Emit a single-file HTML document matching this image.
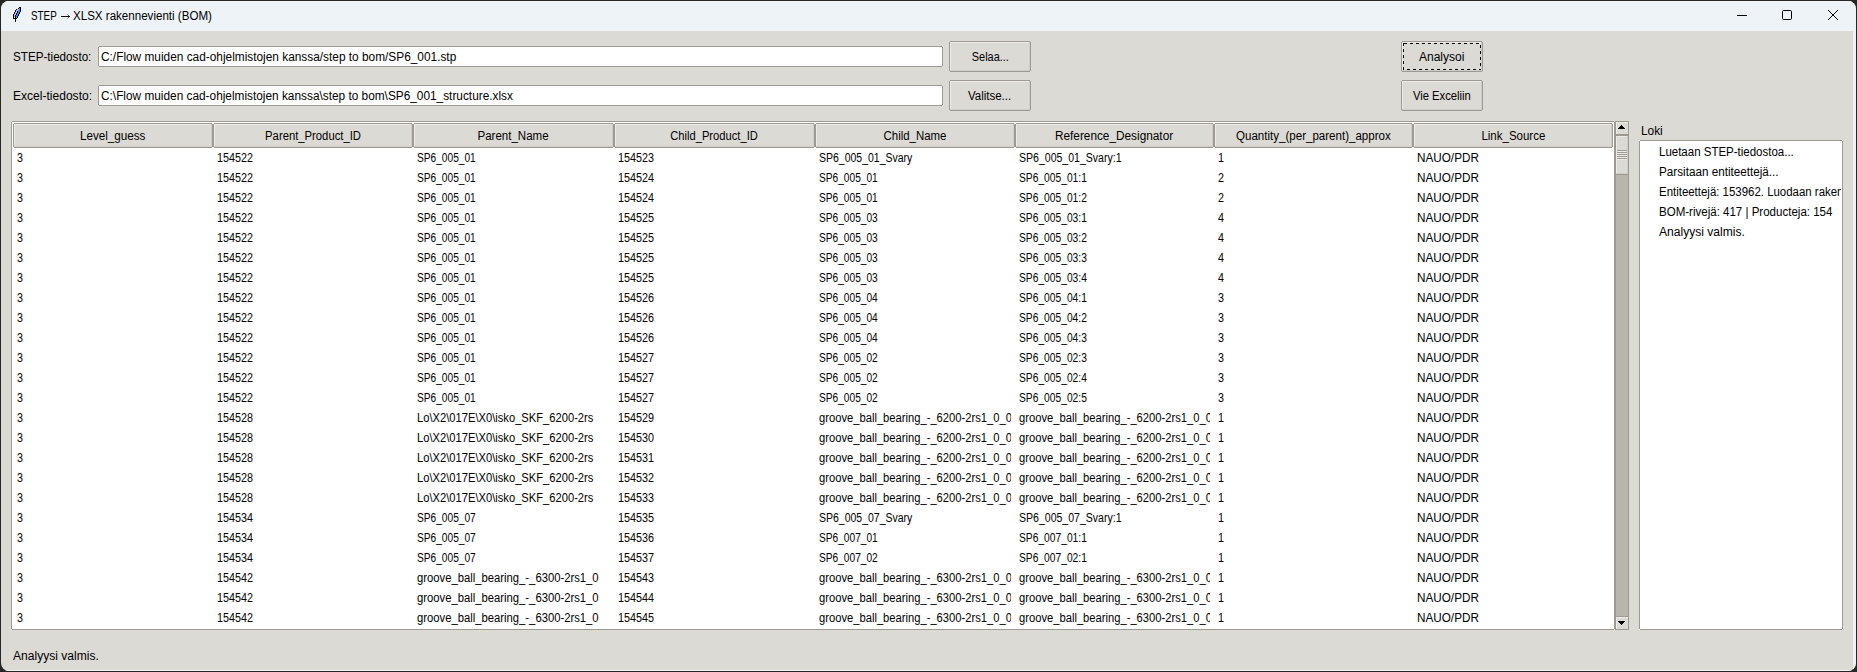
<!DOCTYPE html>
<html><head><meta charset="utf-8"><style>
html,body{margin:0;padding:0}
body{width:1857px;height:672px;background:#262626;overflow:hidden;position:relative;font-family:"Liberation Sans",sans-serif;font-size:12px;color:#000}
#win{position:absolute;left:0;top:0;width:1857px;height:672px;background:#dcdad5;clip-path:inset(1px 1px 1px 1px round 8px)}
.r{position:absolute}
.s{display:inline-block;white-space:pre}
.t{position:absolute;white-space:pre;line-height:14px}
.td{position:absolute;height:14px;line-height:14px;white-space:pre;overflow:hidden}
</style></head><body><div id="win">
<div class="r" style="left:0px;top:0px;width:1857px;height:31px;background:#edf3f7"></div>
<div class="r" style="left:0px;top:0px;width:1857px;height:2px;background:#f7fafc"></div>
<svg class="r" style="left:0;top:0" width="30" height="30" shape-rendering="crispEdges"><rect x="19" y="7" width="1" height="1" fill="#000"/><rect x="20" y="7" width="1" height="1" fill="#000"/><rect x="18" y="8" width="1" height="1" fill="#000"/><rect x="19" y="8" width="1" height="1" fill="#3d8ae6"/><rect x="20" y="8" width="1" height="1" fill="#000"/><rect x="16" y="9" width="1" height="1" fill="#000"/><rect x="17" y="9" width="1" height="1" fill="#9cc4f4"/><rect x="18" y="9" width="1" height="1" fill="#9cc4f4"/><rect x="19" y="9" width="1" height="1" fill="#3d8ae6"/><rect x="20" y="9" width="1" height="1" fill="#000"/><rect x="15" y="10" width="1" height="1" fill="#000"/><rect x="16" y="10" width="1" height="1" fill="#9cc4f4"/><rect x="17" y="10" width="1" height="1" fill="#9cc4f4"/><rect x="18" y="10" width="1" height="1" fill="#3d8ae6"/><rect x="19" y="10" width="1" height="1" fill="#3d8ae6"/><rect x="20" y="10" width="1" height="1" fill="#000"/><rect x="15" y="11" width="1" height="1" fill="#000"/><rect x="16" y="11" width="1" height="1" fill="#9cc4f4"/><rect x="17" y="11" width="1" height="1" fill="#000"/><rect x="18" y="11" width="1" height="1" fill="#3d8ae6"/><rect x="19" y="11" width="1" height="1" fill="#3d8ae6"/><rect x="20" y="11" width="1" height="1" fill="#000"/><rect x="14" y="12" width="1" height="1" fill="#000"/><rect x="15" y="12" width="1" height="1" fill="#9cc4f4"/><rect x="16" y="12" width="1" height="1" fill="#9cc4f4"/><rect x="17" y="12" width="1" height="1" fill="#000"/><rect x="18" y="12" width="1" height="1" fill="#3d8ae6"/><rect x="19" y="12" width="1" height="1" fill="#000"/><rect x="14" y="13" width="1" height="1" fill="#000"/><rect x="15" y="13" width="1" height="1" fill="#9cc4f4"/><rect x="16" y="13" width="1" height="1" fill="#000"/><rect x="17" y="13" width="1" height="1" fill="#3d8ae6"/><rect x="18" y="13" width="1" height="1" fill="#3d8ae6"/><rect x="19" y="13" width="1" height="1" fill="#000"/><rect x="13" y="14" width="1" height="1" fill="#000"/><rect x="14" y="14" width="1" height="1" fill="#9cc4f4"/><rect x="15" y="14" width="1" height="1" fill="#9cc4f4"/><rect x="16" y="14" width="1" height="1" fill="#000"/><rect x="17" y="14" width="1" height="1" fill="#3d8ae6"/><rect x="18" y="14" width="1" height="1" fill="#000"/><rect x="13" y="15" width="1" height="1" fill="#000"/><rect x="14" y="15" width="1" height="1" fill="#9cc4f4"/><rect x="15" y="15" width="1" height="1" fill="#000"/><rect x="16" y="15" width="1" height="1" fill="#3d8ae6"/><rect x="17" y="15" width="1" height="1" fill="#3d8ae6"/><rect x="18" y="15" width="1" height="1" fill="#000"/><rect x="13" y="16" width="1" height="1" fill="#000"/><rect x="14" y="16" width="1" height="1" fill="#9cc4f4"/><rect x="15" y="16" width="1" height="1" fill="#000"/><rect x="16" y="16" width="1" height="1" fill="#3d8ae6"/><rect x="17" y="16" width="1" height="1" fill="#000"/><rect x="13" y="17" width="1" height="1" fill="#000"/><rect x="14" y="17" width="1" height="1" fill="#fff"/><rect x="15" y="17" width="1" height="1" fill="#000"/><rect x="16" y="17" width="1" height="1" fill="#3d8ae6"/><rect x="17" y="17" width="1" height="1" fill="#000"/><rect x="13" y="18" width="1" height="1" fill="#000"/><rect x="14" y="18" width="1" height="1" fill="#000"/><rect x="15" y="18" width="1" height="1" fill="#000"/><rect x="16" y="18" width="1" height="1" fill="#000"/><rect x="15" y="19" width="1" height="1" fill="#000"/><rect x="15" y="20" width="1" height="1" fill="#000"/><rect x="15" y="21" width="1" height="1" fill="#000"/></svg>
<div class="t" style="left:31px;top:9px;"><span class="s" style="transform:scaleX(0.8200);transform-origin:left">STEP</span></div>
<div class="r" style="left:61px;top:16px;width:9px;height:1px;background:#000"></div>
<div class="r" style="left:67px;top:14px;width:1px;height:1px;background:#b0b0b0"></div>
<div class="r" style="left:68px;top:15px;width:1px;height:1px;background:#606060"></div>
<div class="r" style="left:68px;top:17px;width:1px;height:1px;background:#606060"></div>
<div class="r" style="left:67px;top:18px;width:1px;height:1px;background:#b0b0b0"></div>
<div class="t" style="left:73px;top:9px;"><span class="s" style="transform:scaleX(0.9640);transform-origin:left">XLSX rakennevienti (BOM)</span></div>
<svg class="r" style="left:1730px;top:5px" width="120" height="22">
<line x1="7" y1="10.5" x2="17" y2="10.5" stroke="#000" stroke-width="1"/>
<rect x="52.5" y="5.5" width="9" height="9" rx="1.2" fill="none" stroke="#000" stroke-width="1"/>
<line x1="98" y1="5" x2="108" y2="15" stroke="#000" stroke-width="1"/>
<line x1="108" y1="5" x2="98" y2="15" stroke="#000" stroke-width="1"/>
</svg>
<div class="r" style="left:1853px;top:31px;width:4px;height:641px;background:#f1f1f1"></div>
<div class="r" style="left:0px;top:670px;width:1857px;height:2px;background:#f1f1f1"></div>
<div class="t" style="left:13px;top:50px;"><span class="s" style="transform:scaleX(0.9710);transform-origin:left">STEP-tiedosto:</span></div>
<div class="r" style="left:99px;top:47px;width:843px;height:19px;background:#ffffff"></div>
<div class="r" style="left:99px;top:46px;width:843px;height:1px;background:#9e9a91"></div>
<div class="r" style="left:99px;top:66px;width:843px;height:1px;background:#9e9a91"></div>
<div class="r" style="left:98px;top:47px;width:1px;height:19px;background:#9e9a91"></div>
<div class="r" style="left:942px;top:47px;width:1px;height:19px;background:#9e9a91"></div>
<div class="t" style="left:101px;top:50px;"><span class="s" style="transform:scaleX(0.9881);transform-origin:left">C:/Flow muiden cad-ohjelmistojen kanssa/step to bom/SP6_001.stp</span></div>
<div class="r" style="left:950px;top:42px;width:80px;height:29px;background:#dcdad5"></div>
<div class="r" style="left:950px;top:41px;width:80px;height:1px;background:#9e9a91"></div>
<div class="r" style="left:950px;top:71px;width:80px;height:1px;background:#9e9a91"></div>
<div class="r" style="left:949px;top:42px;width:1px;height:29px;background:#9e9a91"></div>
<div class="r" style="left:1030px;top:42px;width:1px;height:29px;background:#9e9a91"></div>
<div class="r" style="left:950px;top:42px;width:80px;height:1px;background:#eeebe7"></div>
<div class="r" style="left:950px;top:42px;width:1px;height:29px;background:#eeebe7"></div>
<div class="r" style="left:950px;top:70px;width:80px;height:1px;background:#cfcdc8"></div>
<div class="r" style="left:1029px;top:42px;width:1px;height:29px;background:#cfcdc8"></div>
<div class="t" style="left:949px;top:50px;width:82px;text-align:center;"><span class="s" style="transform:scaleX(0.9110);transform-origin:center">Selaa...</span></div>
<div class="r" style="left:1402px;top:42px;width:80px;height:29px;background:#dcdad5"></div>
<div class="r" style="left:1402px;top:41px;width:80px;height:1px;background:#9e9a91"></div>
<div class="r" style="left:1402px;top:71px;width:80px;height:1px;background:#9e9a91"></div>
<div class="r" style="left:1401px;top:42px;width:1px;height:29px;background:#9e9a91"></div>
<div class="r" style="left:1482px;top:42px;width:1px;height:29px;background:#9e9a91"></div>
<div class="r" style="left:1402px;top:42px;width:80px;height:1px;background:#eeebe7"></div>
<div class="r" style="left:1402px;top:42px;width:1px;height:29px;background:#eeebe7"></div>
<div class="r" style="left:1402px;top:70px;width:80px;height:1px;background:#cfcdc8"></div>
<div class="r" style="left:1481px;top:42px;width:1px;height:29px;background:#cfcdc8"></div>
<svg class="r" style="left:1403px;top:43px" width="78" height="27" shape-rendering="crispEdges"><rect x="0.5" y="0.5" width="77" height="26" fill="none" stroke="#000" stroke-width="1" stroke-dasharray="3,3"/></svg>
<div class="t" style="left:1401px;top:50px;width:82px;text-align:center;"><span class="s" style="transform:scaleX(1.0033);transform-origin:center">Analysoi</span></div>
<div class="t" style="left:13px;top:89px;"><span class="s" style="transform:scaleX(1.0043);transform-origin:left">Excel-tiedosto:</span></div>
<div class="r" style="left:99px;top:86px;width:843px;height:19px;background:#ffffff"></div>
<div class="r" style="left:99px;top:85px;width:843px;height:1px;background:#9e9a91"></div>
<div class="r" style="left:99px;top:105px;width:843px;height:1px;background:#9e9a91"></div>
<div class="r" style="left:98px;top:86px;width:1px;height:19px;background:#9e9a91"></div>
<div class="r" style="left:942px;top:86px;width:1px;height:19px;background:#9e9a91"></div>
<div class="t" style="left:101px;top:89px;"><span class="s" style="transform:scaleX(0.9866);transform-origin:left">C:\Flow muiden cad-ohjelmistojen kanssa\step to bom\SP6_001_structure.xlsx</span></div>
<div class="r" style="left:950px;top:81px;width:80px;height:29px;background:#dcdad5"></div>
<div class="r" style="left:950px;top:80px;width:80px;height:1px;background:#9e9a91"></div>
<div class="r" style="left:950px;top:110px;width:80px;height:1px;background:#9e9a91"></div>
<div class="r" style="left:949px;top:81px;width:1px;height:29px;background:#9e9a91"></div>
<div class="r" style="left:1030px;top:81px;width:1px;height:29px;background:#9e9a91"></div>
<div class="r" style="left:950px;top:81px;width:80px;height:1px;background:#eeebe7"></div>
<div class="r" style="left:950px;top:81px;width:1px;height:29px;background:#eeebe7"></div>
<div class="r" style="left:950px;top:109px;width:80px;height:1px;background:#cfcdc8"></div>
<div class="r" style="left:1029px;top:81px;width:1px;height:29px;background:#cfcdc8"></div>
<div class="t" style="left:949px;top:89px;width:82px;text-align:center;"><span class="s" style="transform:scaleX(0.9594);transform-origin:center">Valitse...</span></div>
<div class="r" style="left:1402px;top:81px;width:80px;height:29px;background:#dcdad5"></div>
<div class="r" style="left:1402px;top:80px;width:80px;height:1px;background:#9e9a91"></div>
<div class="r" style="left:1402px;top:110px;width:80px;height:1px;background:#9e9a91"></div>
<div class="r" style="left:1401px;top:81px;width:1px;height:29px;background:#9e9a91"></div>
<div class="r" style="left:1482px;top:81px;width:1px;height:29px;background:#9e9a91"></div>
<div class="r" style="left:1402px;top:81px;width:80px;height:1px;background:#eeebe7"></div>
<div class="r" style="left:1402px;top:81px;width:1px;height:29px;background:#eeebe7"></div>
<div class="r" style="left:1402px;top:109px;width:80px;height:1px;background:#cfcdc8"></div>
<div class="r" style="left:1481px;top:81px;width:1px;height:29px;background:#cfcdc8"></div>
<div class="t" style="left:1401px;top:89px;width:82px;text-align:center;"><span class="s" style="transform:scaleX(0.9374);transform-origin:center">Vie Exceliin</span></div>
<div class="r" style="left:12px;top:122px;width:1602px;height:507px;background:#ffffff"></div>
<div class="r" style="left:12px;top:121px;width:1602px;height:1px;background:#9e9a91"></div>
<div class="r" style="left:12px;top:629px;width:1602px;height:1px;background:#9e9a91"></div>
<div class="r" style="left:11px;top:122px;width:1px;height:507px;background:#9e9a91"></div>
<div class="r" style="left:1614px;top:122px;width:1px;height:507px;background:#9e9a91"></div>
<div class="r" style="left:14px;top:124px;width:198px;height:23px;background:#dcdad5"></div>
<div class="r" style="left:14px;top:123px;width:198px;height:1px;background:#9e9a91"></div>
<div class="r" style="left:14px;top:147px;width:198px;height:1px;background:#9e9a91"></div>
<div class="r" style="left:13px;top:124px;width:1px;height:23px;background:#9e9a91"></div>
<div class="r" style="left:212px;top:124px;width:1px;height:23px;background:#9e9a91"></div>
<div class="r" style="left:14px;top:124px;width:198px;height:1px;background:#eeebe7"></div>
<div class="r" style="left:14px;top:124px;width:1px;height:23px;background:#eeebe7"></div>
<div class="r" style="left:14px;top:146px;width:198px;height:1px;background:#cfcdc8"></div>
<div class="r" style="left:211px;top:124px;width:1px;height:23px;background:#cfcdc8"></div>
<div class="t" style="left:13px;top:129px;width:200px;text-align:center;"><span class="s" style="transform:scaleX(0.9724);transform-origin:center">Level_guess</span></div>
<div class="r" style="left:214px;top:124px;width:198px;height:23px;background:#dcdad5"></div>
<div class="r" style="left:214px;top:123px;width:198px;height:1px;background:#9e9a91"></div>
<div class="r" style="left:214px;top:147px;width:198px;height:1px;background:#9e9a91"></div>
<div class="r" style="left:213px;top:124px;width:1px;height:23px;background:#9e9a91"></div>
<div class="r" style="left:412px;top:124px;width:1px;height:23px;background:#9e9a91"></div>
<div class="r" style="left:214px;top:124px;width:198px;height:1px;background:#eeebe7"></div>
<div class="r" style="left:214px;top:124px;width:1px;height:23px;background:#eeebe7"></div>
<div class="r" style="left:214px;top:146px;width:198px;height:1px;background:#cfcdc8"></div>
<div class="r" style="left:411px;top:124px;width:1px;height:23px;background:#cfcdc8"></div>
<div class="t" style="left:213px;top:129px;width:200px;text-align:center;"><span class="s" style="transform:scaleX(0.9391);transform-origin:center">Parent_Product_ID</span></div>
<div class="r" style="left:414px;top:124px;width:199px;height:23px;background:#dcdad5"></div>
<div class="r" style="left:414px;top:123px;width:199px;height:1px;background:#9e9a91"></div>
<div class="r" style="left:414px;top:147px;width:199px;height:1px;background:#9e9a91"></div>
<div class="r" style="left:413px;top:124px;width:1px;height:23px;background:#9e9a91"></div>
<div class="r" style="left:613px;top:124px;width:1px;height:23px;background:#9e9a91"></div>
<div class="r" style="left:414px;top:124px;width:199px;height:1px;background:#eeebe7"></div>
<div class="r" style="left:414px;top:124px;width:1px;height:23px;background:#eeebe7"></div>
<div class="r" style="left:414px;top:146px;width:199px;height:1px;background:#cfcdc8"></div>
<div class="r" style="left:612px;top:124px;width:1px;height:23px;background:#cfcdc8"></div>
<div class="t" style="left:413px;top:129px;width:201px;text-align:center;"><span class="s" style="transform:scaleX(0.9612);transform-origin:center">Parent_Name</span></div>
<div class="r" style="left:615px;top:124px;width:199px;height:23px;background:#dcdad5"></div>
<div class="r" style="left:615px;top:123px;width:199px;height:1px;background:#9e9a91"></div>
<div class="r" style="left:615px;top:147px;width:199px;height:1px;background:#9e9a91"></div>
<div class="r" style="left:614px;top:124px;width:1px;height:23px;background:#9e9a91"></div>
<div class="r" style="left:814px;top:124px;width:1px;height:23px;background:#9e9a91"></div>
<div class="r" style="left:615px;top:124px;width:199px;height:1px;background:#eeebe7"></div>
<div class="r" style="left:615px;top:124px;width:1px;height:23px;background:#eeebe7"></div>
<div class="r" style="left:615px;top:146px;width:199px;height:1px;background:#cfcdc8"></div>
<div class="r" style="left:813px;top:124px;width:1px;height:23px;background:#cfcdc8"></div>
<div class="t" style="left:614px;top:129px;width:201px;text-align:center;"><span class="s" style="transform:scaleX(0.9310);transform-origin:center">Child_Product_ID</span></div>
<div class="r" style="left:816px;top:124px;width:198px;height:23px;background:#dcdad5"></div>
<div class="r" style="left:816px;top:123px;width:198px;height:1px;background:#9e9a91"></div>
<div class="r" style="left:816px;top:147px;width:198px;height:1px;background:#9e9a91"></div>
<div class="r" style="left:815px;top:124px;width:1px;height:23px;background:#9e9a91"></div>
<div class="r" style="left:1014px;top:124px;width:1px;height:23px;background:#9e9a91"></div>
<div class="r" style="left:816px;top:124px;width:198px;height:1px;background:#eeebe7"></div>
<div class="r" style="left:816px;top:124px;width:1px;height:23px;background:#eeebe7"></div>
<div class="r" style="left:816px;top:146px;width:198px;height:1px;background:#cfcdc8"></div>
<div class="r" style="left:1013px;top:124px;width:1px;height:23px;background:#cfcdc8"></div>
<div class="t" style="left:815px;top:129px;width:200px;text-align:center;"><span class="s" style="transform:scaleX(0.9524);transform-origin:center">Child_Name</span></div>
<div class="r" style="left:1016px;top:124px;width:197px;height:23px;background:#dcdad5"></div>
<div class="r" style="left:1016px;top:123px;width:197px;height:1px;background:#9e9a91"></div>
<div class="r" style="left:1016px;top:147px;width:197px;height:1px;background:#9e9a91"></div>
<div class="r" style="left:1015px;top:124px;width:1px;height:23px;background:#9e9a91"></div>
<div class="r" style="left:1213px;top:124px;width:1px;height:23px;background:#9e9a91"></div>
<div class="r" style="left:1016px;top:124px;width:197px;height:1px;background:#eeebe7"></div>
<div class="r" style="left:1016px;top:124px;width:1px;height:23px;background:#eeebe7"></div>
<div class="r" style="left:1016px;top:146px;width:197px;height:1px;background:#cfcdc8"></div>
<div class="r" style="left:1212px;top:124px;width:1px;height:23px;background:#cfcdc8"></div>
<div class="t" style="left:1015px;top:129px;width:199px;text-align:center;"><span class="s" style="transform:scaleX(0.9846);transform-origin:center">Reference_Designator</span></div>
<div class="r" style="left:1215px;top:124px;width:197px;height:23px;background:#dcdad5"></div>
<div class="r" style="left:1215px;top:123px;width:197px;height:1px;background:#9e9a91"></div>
<div class="r" style="left:1215px;top:147px;width:197px;height:1px;background:#9e9a91"></div>
<div class="r" style="left:1214px;top:124px;width:1px;height:23px;background:#9e9a91"></div>
<div class="r" style="left:1412px;top:124px;width:1px;height:23px;background:#9e9a91"></div>
<div class="r" style="left:1215px;top:124px;width:197px;height:1px;background:#eeebe7"></div>
<div class="r" style="left:1215px;top:124px;width:1px;height:23px;background:#eeebe7"></div>
<div class="r" style="left:1215px;top:146px;width:197px;height:1px;background:#cfcdc8"></div>
<div class="r" style="left:1411px;top:124px;width:1px;height:23px;background:#cfcdc8"></div>
<div class="t" style="left:1214px;top:129px;width:199px;text-align:center;"><span class="s" style="transform:scaleX(0.9628);transform-origin:center">Quantity_(per_parent)_approx</span></div>
<div class="r" style="left:1414px;top:124px;width:198px;height:23px;background:#dcdad5"></div>
<div class="r" style="left:1414px;top:123px;width:198px;height:1px;background:#9e9a91"></div>
<div class="r" style="left:1414px;top:147px;width:198px;height:1px;background:#9e9a91"></div>
<div class="r" style="left:1413px;top:124px;width:1px;height:23px;background:#9e9a91"></div>
<div class="r" style="left:1612px;top:124px;width:1px;height:23px;background:#9e9a91"></div>
<div class="r" style="left:1414px;top:124px;width:198px;height:1px;background:#eeebe7"></div>
<div class="r" style="left:1414px;top:124px;width:1px;height:23px;background:#eeebe7"></div>
<div class="r" style="left:1414px;top:146px;width:198px;height:1px;background:#cfcdc8"></div>
<div class="r" style="left:1611px;top:124px;width:1px;height:23px;background:#cfcdc8"></div>
<div class="t" style="left:1413px;top:129px;width:200px;text-align:center;"><span class="s" style="transform:scaleX(0.9578);transform-origin:center">Link_Source</span></div>
<div class="td" style="left:17px;top:151px;width:192px"><span class="s" style="transform:scaleX(0.8975);transform-origin:left">3</span></div>
<div class="td" style="left:217px;top:151px;width:192px"><span class="s" style="transform:scaleX(0.8975);transform-origin:left">154522</span></div>
<div class="td" style="left:417px;top:151px;width:193px"><span class="s" style="transform:scaleX(0.8464);transform-origin:left">SP6_005_01</span></div>
<div class="td" style="left:618px;top:151px;width:193px"><span class="s" style="transform:scaleX(0.8975);transform-origin:left">154523</span></div>
<div class="td" style="left:819px;top:151px;width:192px"><span class="s" style="transform:scaleX(0.8745);transform-origin:left">SP6_005_01_Svary</span></div>
<div class="td" style="left:1019px;top:151px;width:191px"><span class="s" style="transform:scaleX(0.8778);transform-origin:left">SP6_005_01_Svary:1</span></div>
<div class="td" style="left:1218px;top:151px;width:191px"><span class="s" style="transform:scaleX(0.8975);transform-origin:left">1</span></div>
<div class="td" style="left:1417px;top:151px;width:192px"><span class="s" style="transform:scaleX(0.9769);transform-origin:left">NAUO/PDR</span></div>
<div class="td" style="left:17px;top:171px;width:192px"><span class="s" style="transform:scaleX(0.8975);transform-origin:left">3</span></div>
<div class="td" style="left:217px;top:171px;width:192px"><span class="s" style="transform:scaleX(0.8975);transform-origin:left">154522</span></div>
<div class="td" style="left:417px;top:171px;width:193px"><span class="s" style="transform:scaleX(0.8464);transform-origin:left">SP6_005_01</span></div>
<div class="td" style="left:618px;top:171px;width:193px"><span class="s" style="transform:scaleX(0.8975);transform-origin:left">154524</span></div>
<div class="td" style="left:819px;top:171px;width:192px"><span class="s" style="transform:scaleX(0.8464);transform-origin:left">SP6_005_01</span></div>
<div class="td" style="left:1019px;top:171px;width:191px"><span class="s" style="transform:scaleX(0.8547);transform-origin:left">SP6_005_01:1</span></div>
<div class="td" style="left:1218px;top:171px;width:191px"><span class="s" style="transform:scaleX(0.8975);transform-origin:left">2</span></div>
<div class="td" style="left:1417px;top:171px;width:192px"><span class="s" style="transform:scaleX(0.9769);transform-origin:left">NAUO/PDR</span></div>
<div class="td" style="left:17px;top:191px;width:192px"><span class="s" style="transform:scaleX(0.8975);transform-origin:left">3</span></div>
<div class="td" style="left:217px;top:191px;width:192px"><span class="s" style="transform:scaleX(0.8975);transform-origin:left">154522</span></div>
<div class="td" style="left:417px;top:191px;width:193px"><span class="s" style="transform:scaleX(0.8464);transform-origin:left">SP6_005_01</span></div>
<div class="td" style="left:618px;top:191px;width:193px"><span class="s" style="transform:scaleX(0.8975);transform-origin:left">154524</span></div>
<div class="td" style="left:819px;top:191px;width:192px"><span class="s" style="transform:scaleX(0.8464);transform-origin:left">SP6_005_01</span></div>
<div class="td" style="left:1019px;top:191px;width:191px"><span class="s" style="transform:scaleX(0.8547);transform-origin:left">SP6_005_01:2</span></div>
<div class="td" style="left:1218px;top:191px;width:191px"><span class="s" style="transform:scaleX(0.8975);transform-origin:left">2</span></div>
<div class="td" style="left:1417px;top:191px;width:192px"><span class="s" style="transform:scaleX(0.9769);transform-origin:left">NAUO/PDR</span></div>
<div class="td" style="left:17px;top:211px;width:192px"><span class="s" style="transform:scaleX(0.8975);transform-origin:left">3</span></div>
<div class="td" style="left:217px;top:211px;width:192px"><span class="s" style="transform:scaleX(0.8975);transform-origin:left">154522</span></div>
<div class="td" style="left:417px;top:211px;width:193px"><span class="s" style="transform:scaleX(0.8464);transform-origin:left">SP6_005_01</span></div>
<div class="td" style="left:618px;top:211px;width:193px"><span class="s" style="transform:scaleX(0.8975);transform-origin:left">154525</span></div>
<div class="td" style="left:819px;top:211px;width:192px"><span class="s" style="transform:scaleX(0.8464);transform-origin:left">SP6_005_03</span></div>
<div class="td" style="left:1019px;top:211px;width:191px"><span class="s" style="transform:scaleX(0.8547);transform-origin:left">SP6_005_03:1</span></div>
<div class="td" style="left:1218px;top:211px;width:191px"><span class="s" style="transform:scaleX(0.8975);transform-origin:left">4</span></div>
<div class="td" style="left:1417px;top:211px;width:192px"><span class="s" style="transform:scaleX(0.9769);transform-origin:left">NAUO/PDR</span></div>
<div class="td" style="left:17px;top:231px;width:192px"><span class="s" style="transform:scaleX(0.8975);transform-origin:left">3</span></div>
<div class="td" style="left:217px;top:231px;width:192px"><span class="s" style="transform:scaleX(0.8975);transform-origin:left">154522</span></div>
<div class="td" style="left:417px;top:231px;width:193px"><span class="s" style="transform:scaleX(0.8464);transform-origin:left">SP6_005_01</span></div>
<div class="td" style="left:618px;top:231px;width:193px"><span class="s" style="transform:scaleX(0.8975);transform-origin:left">154525</span></div>
<div class="td" style="left:819px;top:231px;width:192px"><span class="s" style="transform:scaleX(0.8464);transform-origin:left">SP6_005_03</span></div>
<div class="td" style="left:1019px;top:231px;width:191px"><span class="s" style="transform:scaleX(0.8547);transform-origin:left">SP6_005_03:2</span></div>
<div class="td" style="left:1218px;top:231px;width:191px"><span class="s" style="transform:scaleX(0.8975);transform-origin:left">4</span></div>
<div class="td" style="left:1417px;top:231px;width:192px"><span class="s" style="transform:scaleX(0.9769);transform-origin:left">NAUO/PDR</span></div>
<div class="td" style="left:17px;top:251px;width:192px"><span class="s" style="transform:scaleX(0.8975);transform-origin:left">3</span></div>
<div class="td" style="left:217px;top:251px;width:192px"><span class="s" style="transform:scaleX(0.8975);transform-origin:left">154522</span></div>
<div class="td" style="left:417px;top:251px;width:193px"><span class="s" style="transform:scaleX(0.8464);transform-origin:left">SP6_005_01</span></div>
<div class="td" style="left:618px;top:251px;width:193px"><span class="s" style="transform:scaleX(0.8975);transform-origin:left">154525</span></div>
<div class="td" style="left:819px;top:251px;width:192px"><span class="s" style="transform:scaleX(0.8464);transform-origin:left">SP6_005_03</span></div>
<div class="td" style="left:1019px;top:251px;width:191px"><span class="s" style="transform:scaleX(0.8547);transform-origin:left">SP6_005_03:3</span></div>
<div class="td" style="left:1218px;top:251px;width:191px"><span class="s" style="transform:scaleX(0.8975);transform-origin:left">4</span></div>
<div class="td" style="left:1417px;top:251px;width:192px"><span class="s" style="transform:scaleX(0.9769);transform-origin:left">NAUO/PDR</span></div>
<div class="td" style="left:17px;top:271px;width:192px"><span class="s" style="transform:scaleX(0.8975);transform-origin:left">3</span></div>
<div class="td" style="left:217px;top:271px;width:192px"><span class="s" style="transform:scaleX(0.8975);transform-origin:left">154522</span></div>
<div class="td" style="left:417px;top:271px;width:193px"><span class="s" style="transform:scaleX(0.8464);transform-origin:left">SP6_005_01</span></div>
<div class="td" style="left:618px;top:271px;width:193px"><span class="s" style="transform:scaleX(0.8975);transform-origin:left">154525</span></div>
<div class="td" style="left:819px;top:271px;width:192px"><span class="s" style="transform:scaleX(0.8464);transform-origin:left">SP6_005_03</span></div>
<div class="td" style="left:1019px;top:271px;width:191px"><span class="s" style="transform:scaleX(0.8547);transform-origin:left">SP6_005_03:4</span></div>
<div class="td" style="left:1218px;top:271px;width:191px"><span class="s" style="transform:scaleX(0.8975);transform-origin:left">4</span></div>
<div class="td" style="left:1417px;top:271px;width:192px"><span class="s" style="transform:scaleX(0.9769);transform-origin:left">NAUO/PDR</span></div>
<div class="td" style="left:17px;top:291px;width:192px"><span class="s" style="transform:scaleX(0.8975);transform-origin:left">3</span></div>
<div class="td" style="left:217px;top:291px;width:192px"><span class="s" style="transform:scaleX(0.8975);transform-origin:left">154522</span></div>
<div class="td" style="left:417px;top:291px;width:193px"><span class="s" style="transform:scaleX(0.8464);transform-origin:left">SP6_005_01</span></div>
<div class="td" style="left:618px;top:291px;width:193px"><span class="s" style="transform:scaleX(0.8975);transform-origin:left">154526</span></div>
<div class="td" style="left:819px;top:291px;width:192px"><span class="s" style="transform:scaleX(0.8464);transform-origin:left">SP6_005_04</span></div>
<div class="td" style="left:1019px;top:291px;width:191px"><span class="s" style="transform:scaleX(0.8547);transform-origin:left">SP6_005_04:1</span></div>
<div class="td" style="left:1218px;top:291px;width:191px"><span class="s" style="transform:scaleX(0.8975);transform-origin:left">3</span></div>
<div class="td" style="left:1417px;top:291px;width:192px"><span class="s" style="transform:scaleX(0.9769);transform-origin:left">NAUO/PDR</span></div>
<div class="td" style="left:17px;top:311px;width:192px"><span class="s" style="transform:scaleX(0.8975);transform-origin:left">3</span></div>
<div class="td" style="left:217px;top:311px;width:192px"><span class="s" style="transform:scaleX(0.8975);transform-origin:left">154522</span></div>
<div class="td" style="left:417px;top:311px;width:193px"><span class="s" style="transform:scaleX(0.8464);transform-origin:left">SP6_005_01</span></div>
<div class="td" style="left:618px;top:311px;width:193px"><span class="s" style="transform:scaleX(0.8975);transform-origin:left">154526</span></div>
<div class="td" style="left:819px;top:311px;width:192px"><span class="s" style="transform:scaleX(0.8464);transform-origin:left">SP6_005_04</span></div>
<div class="td" style="left:1019px;top:311px;width:191px"><span class="s" style="transform:scaleX(0.8547);transform-origin:left">SP6_005_04:2</span></div>
<div class="td" style="left:1218px;top:311px;width:191px"><span class="s" style="transform:scaleX(0.8975);transform-origin:left">3</span></div>
<div class="td" style="left:1417px;top:311px;width:192px"><span class="s" style="transform:scaleX(0.9769);transform-origin:left">NAUO/PDR</span></div>
<div class="td" style="left:17px;top:331px;width:192px"><span class="s" style="transform:scaleX(0.8975);transform-origin:left">3</span></div>
<div class="td" style="left:217px;top:331px;width:192px"><span class="s" style="transform:scaleX(0.8975);transform-origin:left">154522</span></div>
<div class="td" style="left:417px;top:331px;width:193px"><span class="s" style="transform:scaleX(0.8464);transform-origin:left">SP6_005_01</span></div>
<div class="td" style="left:618px;top:331px;width:193px"><span class="s" style="transform:scaleX(0.8975);transform-origin:left">154526</span></div>
<div class="td" style="left:819px;top:331px;width:192px"><span class="s" style="transform:scaleX(0.8464);transform-origin:left">SP6_005_04</span></div>
<div class="td" style="left:1019px;top:331px;width:191px"><span class="s" style="transform:scaleX(0.8547);transform-origin:left">SP6_005_04:3</span></div>
<div class="td" style="left:1218px;top:331px;width:191px"><span class="s" style="transform:scaleX(0.8975);transform-origin:left">3</span></div>
<div class="td" style="left:1417px;top:331px;width:192px"><span class="s" style="transform:scaleX(0.9769);transform-origin:left">NAUO/PDR</span></div>
<div class="td" style="left:17px;top:351px;width:192px"><span class="s" style="transform:scaleX(0.8975);transform-origin:left">3</span></div>
<div class="td" style="left:217px;top:351px;width:192px"><span class="s" style="transform:scaleX(0.8975);transform-origin:left">154522</span></div>
<div class="td" style="left:417px;top:351px;width:193px"><span class="s" style="transform:scaleX(0.8464);transform-origin:left">SP6_005_01</span></div>
<div class="td" style="left:618px;top:351px;width:193px"><span class="s" style="transform:scaleX(0.8975);transform-origin:left">154527</span></div>
<div class="td" style="left:819px;top:351px;width:192px"><span class="s" style="transform:scaleX(0.8464);transform-origin:left">SP6_005_02</span></div>
<div class="td" style="left:1019px;top:351px;width:191px"><span class="s" style="transform:scaleX(0.8547);transform-origin:left">SP6_005_02:3</span></div>
<div class="td" style="left:1218px;top:351px;width:191px"><span class="s" style="transform:scaleX(0.8975);transform-origin:left">3</span></div>
<div class="td" style="left:1417px;top:351px;width:192px"><span class="s" style="transform:scaleX(0.9769);transform-origin:left">NAUO/PDR</span></div>
<div class="td" style="left:17px;top:371px;width:192px"><span class="s" style="transform:scaleX(0.8975);transform-origin:left">3</span></div>
<div class="td" style="left:217px;top:371px;width:192px"><span class="s" style="transform:scaleX(0.8975);transform-origin:left">154522</span></div>
<div class="td" style="left:417px;top:371px;width:193px"><span class="s" style="transform:scaleX(0.8464);transform-origin:left">SP6_005_01</span></div>
<div class="td" style="left:618px;top:371px;width:193px"><span class="s" style="transform:scaleX(0.8975);transform-origin:left">154527</span></div>
<div class="td" style="left:819px;top:371px;width:192px"><span class="s" style="transform:scaleX(0.8464);transform-origin:left">SP6_005_02</span></div>
<div class="td" style="left:1019px;top:371px;width:191px"><span class="s" style="transform:scaleX(0.8547);transform-origin:left">SP6_005_02:4</span></div>
<div class="td" style="left:1218px;top:371px;width:191px"><span class="s" style="transform:scaleX(0.8975);transform-origin:left">3</span></div>
<div class="td" style="left:1417px;top:371px;width:192px"><span class="s" style="transform:scaleX(0.9769);transform-origin:left">NAUO/PDR</span></div>
<div class="td" style="left:17px;top:391px;width:192px"><span class="s" style="transform:scaleX(0.8975);transform-origin:left">3</span></div>
<div class="td" style="left:217px;top:391px;width:192px"><span class="s" style="transform:scaleX(0.8975);transform-origin:left">154522</span></div>
<div class="td" style="left:417px;top:391px;width:193px"><span class="s" style="transform:scaleX(0.8464);transform-origin:left">SP6_005_01</span></div>
<div class="td" style="left:618px;top:391px;width:193px"><span class="s" style="transform:scaleX(0.8975);transform-origin:left">154527</span></div>
<div class="td" style="left:819px;top:391px;width:192px"><span class="s" style="transform:scaleX(0.8464);transform-origin:left">SP6_005_02</span></div>
<div class="td" style="left:1019px;top:391px;width:191px"><span class="s" style="transform:scaleX(0.8547);transform-origin:left">SP6_005_02:5</span></div>
<div class="td" style="left:1218px;top:391px;width:191px"><span class="s" style="transform:scaleX(0.8975);transform-origin:left">3</span></div>
<div class="td" style="left:1417px;top:391px;width:192px"><span class="s" style="transform:scaleX(0.9769);transform-origin:left">NAUO/PDR</span></div>
<div class="td" style="left:17px;top:411px;width:192px"><span class="s" style="transform:scaleX(0.8975);transform-origin:left">3</span></div>
<div class="td" style="left:217px;top:411px;width:192px"><span class="s" style="transform:scaleX(0.8975);transform-origin:left">154528</span></div>
<div class="td" style="left:417px;top:411px;width:193px"><span class="s" style="transform:scaleX(0.9310);transform-origin:left">Lo\X2\017E\X0\isko_SKF_6200-2rs</span></div>
<div class="td" style="left:618px;top:411px;width:193px"><span class="s" style="transform:scaleX(0.8975);transform-origin:left">154529</span></div>
<div class="td" style="left:819px;top:411px;width:192px"><span class="s" style="transform:scaleX(0.9328);transform-origin:left">groove_ball_bearing_-_6200-2rs1_0_0</span></div>
<div class="td" style="left:1019px;top:411px;width:191px"><span class="s" style="transform:scaleX(0.9328);transform-origin:left">groove_ball_bearing_-_6200-2rs1_0_0</span></div>
<div class="td" style="left:1218px;top:411px;width:191px"><span class="s" style="transform:scaleX(0.8975);transform-origin:left">1</span></div>
<div class="td" style="left:1417px;top:411px;width:192px"><span class="s" style="transform:scaleX(0.9769);transform-origin:left">NAUO/PDR</span></div>
<div class="td" style="left:17px;top:431px;width:192px"><span class="s" style="transform:scaleX(0.8975);transform-origin:left">3</span></div>
<div class="td" style="left:217px;top:431px;width:192px"><span class="s" style="transform:scaleX(0.8975);transform-origin:left">154528</span></div>
<div class="td" style="left:417px;top:431px;width:193px"><span class="s" style="transform:scaleX(0.9310);transform-origin:left">Lo\X2\017E\X0\isko_SKF_6200-2rs</span></div>
<div class="td" style="left:618px;top:431px;width:193px"><span class="s" style="transform:scaleX(0.8975);transform-origin:left">154530</span></div>
<div class="td" style="left:819px;top:431px;width:192px"><span class="s" style="transform:scaleX(0.9328);transform-origin:left">groove_ball_bearing_-_6200-2rs1_0_0</span></div>
<div class="td" style="left:1019px;top:431px;width:191px"><span class="s" style="transform:scaleX(0.9328);transform-origin:left">groove_ball_bearing_-_6200-2rs1_0_0</span></div>
<div class="td" style="left:1218px;top:431px;width:191px"><span class="s" style="transform:scaleX(0.8975);transform-origin:left">1</span></div>
<div class="td" style="left:1417px;top:431px;width:192px"><span class="s" style="transform:scaleX(0.9769);transform-origin:left">NAUO/PDR</span></div>
<div class="td" style="left:17px;top:451px;width:192px"><span class="s" style="transform:scaleX(0.8975);transform-origin:left">3</span></div>
<div class="td" style="left:217px;top:451px;width:192px"><span class="s" style="transform:scaleX(0.8975);transform-origin:left">154528</span></div>
<div class="td" style="left:417px;top:451px;width:193px"><span class="s" style="transform:scaleX(0.9310);transform-origin:left">Lo\X2\017E\X0\isko_SKF_6200-2rs</span></div>
<div class="td" style="left:618px;top:451px;width:193px"><span class="s" style="transform:scaleX(0.8975);transform-origin:left">154531</span></div>
<div class="td" style="left:819px;top:451px;width:192px"><span class="s" style="transform:scaleX(0.9328);transform-origin:left">groove_ball_bearing_-_6200-2rs1_0_0</span></div>
<div class="td" style="left:1019px;top:451px;width:191px"><span class="s" style="transform:scaleX(0.9328);transform-origin:left">groove_ball_bearing_-_6200-2rs1_0_0</span></div>
<div class="td" style="left:1218px;top:451px;width:191px"><span class="s" style="transform:scaleX(0.8975);transform-origin:left">1</span></div>
<div class="td" style="left:1417px;top:451px;width:192px"><span class="s" style="transform:scaleX(0.9769);transform-origin:left">NAUO/PDR</span></div>
<div class="td" style="left:17px;top:471px;width:192px"><span class="s" style="transform:scaleX(0.8975);transform-origin:left">3</span></div>
<div class="td" style="left:217px;top:471px;width:192px"><span class="s" style="transform:scaleX(0.8975);transform-origin:left">154528</span></div>
<div class="td" style="left:417px;top:471px;width:193px"><span class="s" style="transform:scaleX(0.9310);transform-origin:left">Lo\X2\017E\X0\isko_SKF_6200-2rs</span></div>
<div class="td" style="left:618px;top:471px;width:193px"><span class="s" style="transform:scaleX(0.8975);transform-origin:left">154532</span></div>
<div class="td" style="left:819px;top:471px;width:192px"><span class="s" style="transform:scaleX(0.9328);transform-origin:left">groove_ball_bearing_-_6200-2rs1_0_0</span></div>
<div class="td" style="left:1019px;top:471px;width:191px"><span class="s" style="transform:scaleX(0.9328);transform-origin:left">groove_ball_bearing_-_6200-2rs1_0_0</span></div>
<div class="td" style="left:1218px;top:471px;width:191px"><span class="s" style="transform:scaleX(0.8975);transform-origin:left">1</span></div>
<div class="td" style="left:1417px;top:471px;width:192px"><span class="s" style="transform:scaleX(0.9769);transform-origin:left">NAUO/PDR</span></div>
<div class="td" style="left:17px;top:491px;width:192px"><span class="s" style="transform:scaleX(0.8975);transform-origin:left">3</span></div>
<div class="td" style="left:217px;top:491px;width:192px"><span class="s" style="transform:scaleX(0.8975);transform-origin:left">154528</span></div>
<div class="td" style="left:417px;top:491px;width:193px"><span class="s" style="transform:scaleX(0.9310);transform-origin:left">Lo\X2\017E\X0\isko_SKF_6200-2rs</span></div>
<div class="td" style="left:618px;top:491px;width:193px"><span class="s" style="transform:scaleX(0.8975);transform-origin:left">154533</span></div>
<div class="td" style="left:819px;top:491px;width:192px"><span class="s" style="transform:scaleX(0.9328);transform-origin:left">groove_ball_bearing_-_6200-2rs1_0_0</span></div>
<div class="td" style="left:1019px;top:491px;width:191px"><span class="s" style="transform:scaleX(0.9328);transform-origin:left">groove_ball_bearing_-_6200-2rs1_0_0</span></div>
<div class="td" style="left:1218px;top:491px;width:191px"><span class="s" style="transform:scaleX(0.8975);transform-origin:left">1</span></div>
<div class="td" style="left:1417px;top:491px;width:192px"><span class="s" style="transform:scaleX(0.9769);transform-origin:left">NAUO/PDR</span></div>
<div class="td" style="left:17px;top:511px;width:192px"><span class="s" style="transform:scaleX(0.8975);transform-origin:left">3</span></div>
<div class="td" style="left:217px;top:511px;width:192px"><span class="s" style="transform:scaleX(0.8975);transform-origin:left">154534</span></div>
<div class="td" style="left:417px;top:511px;width:193px"><span class="s" style="transform:scaleX(0.8464);transform-origin:left">SP6_005_07</span></div>
<div class="td" style="left:618px;top:511px;width:193px"><span class="s" style="transform:scaleX(0.8975);transform-origin:left">154535</span></div>
<div class="td" style="left:819px;top:511px;width:192px"><span class="s" style="transform:scaleX(0.8745);transform-origin:left">SP6_005_07_Svary</span></div>
<div class="td" style="left:1019px;top:511px;width:191px"><span class="s" style="transform:scaleX(0.8778);transform-origin:left">SP6_005_07_Svary:1</span></div>
<div class="td" style="left:1218px;top:511px;width:191px"><span class="s" style="transform:scaleX(0.8975);transform-origin:left">1</span></div>
<div class="td" style="left:1417px;top:511px;width:192px"><span class="s" style="transform:scaleX(0.9769);transform-origin:left">NAUO/PDR</span></div>
<div class="td" style="left:17px;top:531px;width:192px"><span class="s" style="transform:scaleX(0.8975);transform-origin:left">3</span></div>
<div class="td" style="left:217px;top:531px;width:192px"><span class="s" style="transform:scaleX(0.8975);transform-origin:left">154534</span></div>
<div class="td" style="left:417px;top:531px;width:193px"><span class="s" style="transform:scaleX(0.8464);transform-origin:left">SP6_005_07</span></div>
<div class="td" style="left:618px;top:531px;width:193px"><span class="s" style="transform:scaleX(0.8975);transform-origin:left">154536</span></div>
<div class="td" style="left:819px;top:531px;width:192px"><span class="s" style="transform:scaleX(0.8464);transform-origin:left">SP6_007_01</span></div>
<div class="td" style="left:1019px;top:531px;width:191px"><span class="s" style="transform:scaleX(0.8547);transform-origin:left">SP6_007_01:1</span></div>
<div class="td" style="left:1218px;top:531px;width:191px"><span class="s" style="transform:scaleX(0.8975);transform-origin:left">1</span></div>
<div class="td" style="left:1417px;top:531px;width:192px"><span class="s" style="transform:scaleX(0.9769);transform-origin:left">NAUO/PDR</span></div>
<div class="td" style="left:17px;top:551px;width:192px"><span class="s" style="transform:scaleX(0.8975);transform-origin:left">3</span></div>
<div class="td" style="left:217px;top:551px;width:192px"><span class="s" style="transform:scaleX(0.8975);transform-origin:left">154534</span></div>
<div class="td" style="left:417px;top:551px;width:193px"><span class="s" style="transform:scaleX(0.8464);transform-origin:left">SP6_005_07</span></div>
<div class="td" style="left:618px;top:551px;width:193px"><span class="s" style="transform:scaleX(0.8975);transform-origin:left">154537</span></div>
<div class="td" style="left:819px;top:551px;width:192px"><span class="s" style="transform:scaleX(0.8464);transform-origin:left">SP6_007_02</span></div>
<div class="td" style="left:1019px;top:551px;width:191px"><span class="s" style="transform:scaleX(0.8547);transform-origin:left">SP6_007_02:1</span></div>
<div class="td" style="left:1218px;top:551px;width:191px"><span class="s" style="transform:scaleX(0.8975);transform-origin:left">1</span></div>
<div class="td" style="left:1417px;top:551px;width:192px"><span class="s" style="transform:scaleX(0.9769);transform-origin:left">NAUO/PDR</span></div>
<div class="td" style="left:17px;top:571px;width:192px"><span class="s" style="transform:scaleX(0.8975);transform-origin:left">3</span></div>
<div class="td" style="left:217px;top:571px;width:192px"><span class="s" style="transform:scaleX(0.8975);transform-origin:left">154542</span></div>
<div class="td" style="left:417px;top:571px;width:193px"><span class="s" style="transform:scaleX(0.9388);transform-origin:left">groove_ball_bearing_-_6300-2rs1_0</span></div>
<div class="td" style="left:618px;top:571px;width:193px"><span class="s" style="transform:scaleX(0.8975);transform-origin:left">154543</span></div>
<div class="td" style="left:819px;top:571px;width:192px"><span class="s" style="transform:scaleX(0.9328);transform-origin:left">groove_ball_bearing_-_6300-2rs1_0_0</span></div>
<div class="td" style="left:1019px;top:571px;width:191px"><span class="s" style="transform:scaleX(0.9328);transform-origin:left">groove_ball_bearing_-_6300-2rs1_0_0</span></div>
<div class="td" style="left:1218px;top:571px;width:191px"><span class="s" style="transform:scaleX(0.8975);transform-origin:left">1</span></div>
<div class="td" style="left:1417px;top:571px;width:192px"><span class="s" style="transform:scaleX(0.9769);transform-origin:left">NAUO/PDR</span></div>
<div class="td" style="left:17px;top:591px;width:192px"><span class="s" style="transform:scaleX(0.8975);transform-origin:left">3</span></div>
<div class="td" style="left:217px;top:591px;width:192px"><span class="s" style="transform:scaleX(0.8975);transform-origin:left">154542</span></div>
<div class="td" style="left:417px;top:591px;width:193px"><span class="s" style="transform:scaleX(0.9388);transform-origin:left">groove_ball_bearing_-_6300-2rs1_0</span></div>
<div class="td" style="left:618px;top:591px;width:193px"><span class="s" style="transform:scaleX(0.8975);transform-origin:left">154544</span></div>
<div class="td" style="left:819px;top:591px;width:192px"><span class="s" style="transform:scaleX(0.9328);transform-origin:left">groove_ball_bearing_-_6300-2rs1_0_0</span></div>
<div class="td" style="left:1019px;top:591px;width:191px"><span class="s" style="transform:scaleX(0.9328);transform-origin:left">groove_ball_bearing_-_6300-2rs1_0_0</span></div>
<div class="td" style="left:1218px;top:591px;width:191px"><span class="s" style="transform:scaleX(0.8975);transform-origin:left">1</span></div>
<div class="td" style="left:1417px;top:591px;width:192px"><span class="s" style="transform:scaleX(0.9769);transform-origin:left">NAUO/PDR</span></div>
<div class="td" style="left:17px;top:611px;width:192px"><span class="s" style="transform:scaleX(0.8975);transform-origin:left">3</span></div>
<div class="td" style="left:217px;top:611px;width:192px"><span class="s" style="transform:scaleX(0.8975);transform-origin:left">154542</span></div>
<div class="td" style="left:417px;top:611px;width:193px"><span class="s" style="transform:scaleX(0.9388);transform-origin:left">groove_ball_bearing_-_6300-2rs1_0</span></div>
<div class="td" style="left:618px;top:611px;width:193px"><span class="s" style="transform:scaleX(0.8975);transform-origin:left">154545</span></div>
<div class="td" style="left:819px;top:611px;width:192px"><span class="s" style="transform:scaleX(0.9328);transform-origin:left">groove_ball_bearing_-_6300-2rs1_0_0</span></div>
<div class="td" style="left:1019px;top:611px;width:191px"><span class="s" style="transform:scaleX(0.9328);transform-origin:left">groove_ball_bearing_-_6300-2rs1_0_0</span></div>
<div class="td" style="left:1218px;top:611px;width:191px"><span class="s" style="transform:scaleX(0.8975);transform-origin:left">1</span></div>
<div class="td" style="left:1417px;top:611px;width:192px"><span class="s" style="transform:scaleX(0.9769);transform-origin:left">NAUO/PDR</span></div>
<div class="r" style="left:1615px;top:121px;width:14px;height:509px;background:#9e9a91"></div>
<div class="r" style="left:1616px;top:122px;width:12px;height:507px;background:#bab5ab"></div>
<div class="r" style="left:1616px;top:122px;width:12px;height:12px;background:#dcdad5"></div>
<div class="r" style="left:1616px;top:121px;width:12px;height:1px;background:#9e9a91"></div>
<div class="r" style="left:1616px;top:134px;width:12px;height:1px;background:#9e9a91"></div>
<div class="r" style="left:1615px;top:122px;width:1px;height:12px;background:#9e9a91"></div>
<div class="r" style="left:1628px;top:122px;width:1px;height:12px;background:#9e9a91"></div>
<div class="r" style="left:1616px;top:122px;width:12px;height:1px;background:#eeebe7"></div>
<div class="r" style="left:1616px;top:122px;width:1px;height:12px;background:#eeebe7"></div>
<div class="r" style="left:1615px;top:121px;width:14px;height:1px;background:#9e9a91"></div>
<div class="r" style="left:1615px;top:134px;width:14px;height:1px;background:#9e9a91"></div>
<div class="r" style="left:1615px;top:121px;width:1px;height:14px;background:#9e9a91"></div>
<div class="r" style="left:1628px;top:121px;width:1px;height:14px;background:#9e9a91"></div>
<svg class="r" style="left:1615px;top:121px" width="14" height="14" shape-rendering="crispEdges"><rect x="6" y="4" width="1" height="1"/><rect x="5" y="5" width="3" height="1"/><rect x="4" y="6" width="5" height="1"/><rect x="3" y="7" width="7" height="1"/></svg>
<div class="r" style="left:1615px;top:135px;width:14px;height:40px;background:#dcdad5"></div>
<div class="r" style="left:1616px;top:135px;width:12px;height:1px;background:#9e9a91"></div>
<div class="r" style="left:1616px;top:174px;width:12px;height:1px;background:#9e9a91"></div>
<div class="r" style="left:1615px;top:136px;width:1px;height:38px;background:#9e9a91"></div>
<div class="r" style="left:1628px;top:136px;width:1px;height:38px;background:#9e9a91"></div>
<div class="r" style="left:1616px;top:136px;width:12px;height:1px;background:#eeebe7"></div>
<div class="r" style="left:1616px;top:136px;width:1px;height:38px;background:#eeebe7"></div>
<div class="r" style="left:1616px;top:173px;width:12px;height:1px;background:#cfcdc8"></div>
<div class="r" style="left:1627px;top:136px;width:1px;height:38px;background:#cfcdc8"></div>
<div class="r" style="left:1615px;top:135px;width:1px;height:40px;background:#9e9a91"></div>
<div class="r" style="left:1628px;top:135px;width:1px;height:40px;background:#9e9a91"></div>
<div class="r" style="left:1617px;top:150px;width:10px;height:1px;background:#9e9a91"></div>
<div class="r" style="left:1617px;top:151px;width:10px;height:1px;background:#eeebe7"></div>
<div class="r" style="left:1617px;top:152px;width:10px;height:1px;background:#9e9a91"></div>
<div class="r" style="left:1617px;top:153px;width:10px;height:1px;background:#eeebe7"></div>
<div class="r" style="left:1617px;top:154px;width:10px;height:1px;background:#9e9a91"></div>
<div class="r" style="left:1617px;top:155px;width:10px;height:1px;background:#eeebe7"></div>
<div class="r" style="left:1617px;top:156px;width:10px;height:1px;background:#9e9a91"></div>
<div class="r" style="left:1617px;top:157px;width:10px;height:1px;background:#eeebe7"></div>
<div class="r" style="left:1617px;top:158px;width:10px;height:1px;background:#9e9a91"></div>
<div class="r" style="left:1617px;top:159px;width:10px;height:1px;background:#eeebe7"></div>
<div class="r" style="left:1616px;top:617px;width:12px;height:12px;background:#dcdad5"></div>
<div class="r" style="left:1616px;top:616px;width:12px;height:1px;background:#9e9a91"></div>
<div class="r" style="left:1616px;top:629px;width:12px;height:1px;background:#9e9a91"></div>
<div class="r" style="left:1615px;top:617px;width:1px;height:12px;background:#9e9a91"></div>
<div class="r" style="left:1628px;top:617px;width:1px;height:12px;background:#9e9a91"></div>
<div class="r" style="left:1616px;top:617px;width:12px;height:1px;background:#eeebe7"></div>
<div class="r" style="left:1616px;top:617px;width:1px;height:12px;background:#eeebe7"></div>
<div class="r" style="left:1615px;top:616px;width:14px;height:1px;background:#9e9a91"></div>
<div class="r" style="left:1615px;top:629px;width:14px;height:1px;background:#9e9a91"></div>
<div class="r" style="left:1615px;top:616px;width:1px;height:14px;background:#9e9a91"></div>
<div class="r" style="left:1628px;top:616px;width:1px;height:14px;background:#9e9a91"></div>
<svg class="r" style="left:1615px;top:616px" width="14" height="14" shape-rendering="crispEdges"><rect x="3" y="5" width="7" height="1"/><rect x="4" y="6" width="5" height="1"/><rect x="5" y="7" width="3" height="1"/><rect x="6" y="8" width="1" height="1"/></svg>
<div class="t" style="left:1641px;top:124px;"><span class="s" style="transform:scaleX(0.9884);transform-origin:left">Loki</span></div>
<div class="r" style="left:1639px;top:140px;width:204px;height:490px;background:#ffffff"></div>
<div class="r" style="left:1640px;top:140px;width:202px;height:1px;background:#9e9a91"></div>
<div class="r" style="left:1640px;top:629px;width:202px;height:1px;background:#9e9a91"></div>
<div class="r" style="left:1639px;top:141px;width:1px;height:488px;background:#9e9a91"></div>
<div class="r" style="left:1842px;top:141px;width:1px;height:488px;background:#9e9a91"></div>
<div class="td" style="left:1659px;top:145px;width:182px"><span class="s" style="transform:scaleX(0.9576);transform-origin:left">Luetaan STEP-tiedostoa...</span></div>
<div class="td" style="left:1659px;top:165px;width:182px"><span class="s" style="transform:scaleX(0.9741);transform-origin:left">Parsitaan entiteettejä...</span></div>
<div class="td" style="left:1659px;top:185px;width:182px"><span class="s" style="transform:scaleX(0.9534);transform-origin:left">Entiteettejä: 153962. Luodaan rakennetta...</span></div>
<div class="td" style="left:1659px;top:205px;width:182px"><span class="s" style="transform:scaleX(0.9606);transform-origin:left">BOM-rivejä: 417 | Producteja: 154</span></div>
<div class="td" style="left:1659px;top:225px;width:182px"><span class="s" style="transform:scaleX(1.0065);transform-origin:left">Analyysi valmis.</span></div>
<div class="t" style="left:13px;top:649px;"><span class="s" style="transform:scaleX(1.0065);transform-origin:left">Analyysi valmis.</span></div>
</div></body></html>
